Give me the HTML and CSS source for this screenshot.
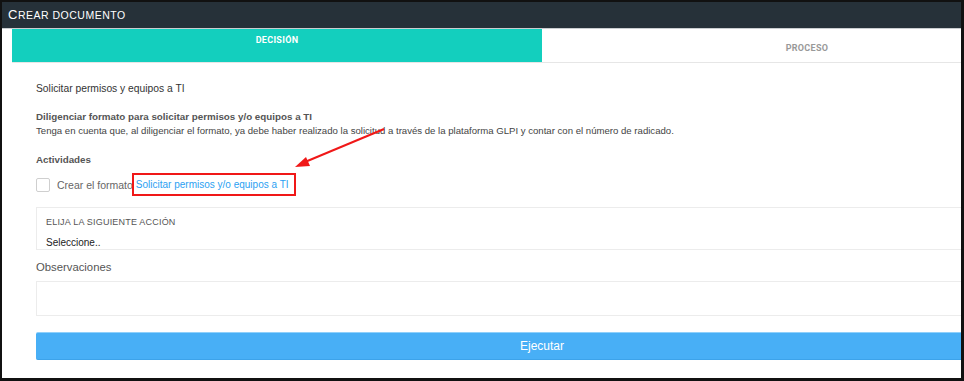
FILE: index.html
```html
<!DOCTYPE html>
<html lang="es">
<head>
    <meta charset="UTF-8">
    <meta name="viewport" content="width=device-width, initial-scale=1.0">
    <title>Crear documento</title>
    <link rel="stylesheet" href="styles.css">
</head>
<body>
    <div class="frame">
        <div class="modal-header">C<span class="sc">REAR DOCUMENTO</span></div>
        <div class="tabs">
            <div class="tab active">DECISIÓN</div>
            <div class="tab">PROCESO</div>
        </div>
        <div class="content">
            <p class="title">Solicitar permisos y equipos a TI</p>
            <p class="subtitle">Diligenciar formato para solicitar permisos y/o equipos a TI</p>
            <p class="note">Tenga en cuenta que, al diligenciar el formato, ya debe haber realizado la solicitud a través de la plataforma GLPI y contar con el número de radicado.</p>
            <p class="section">Actividades</p>
            <div class="check-row">
                <span class="checkbox"></span>
                <span class="check-label">Crear el formato</span>
                <a class="link highlight" href="#">Solicitar permisos y/o equipos a TI</a>
            </div>
            <div class="select-box">
                <div class="select-label">ELIJA LA SIGUIENTE ACCIÓN</div>
                <div class="select-value">Seleccione..</div>
            </div>
            <div class="obs-label">Observaciones</div>
            <div class="textarea"></div>
            <button class="btn-run" type="button">Ejecutar</button>
        </div>
        <svg class="arrow" width="964" height="381" viewBox="0 0 964 381">
            <line x1="384" y1="129" x2="305" y2="162" stroke="#f01818" stroke-width="2"/>
            <polygon points="295,167 306,157 310,166" fill="#f01818"/>
        </svg>
    </div>
</body>
</html>
```

FILE: styles.css
```css
body {
    margin: 0;
    padding: 0;
    font-family: 'Liberation Sans', Arial, sans-serif;
    background: #fff;
}
.frame {
    position: relative;
    width: 964px;
    height: 381px;
    box-sizing: border-box;
    border: 2px solid #111;
    border-right-width: 3px;
    border-bottom-width: 3px;
    overflow: hidden;
    background: #fff;
}
.modal-header {
    height: 26px;
    line-height: 26px;
    padding-left: 6px;
    background: #263139;
    color: #fff;
    font-size: 13px;
    letter-spacing: 0.5px;
    border-bottom: 1px solid #c9cdd0;
}
.modal-header .sc {
    font-size: 10.5px;
}
.tabs {
    display: flex;
    width: 1060px;
    margin-left: 10px;
    border-bottom: 1px solid #e6e6e6;
}
.tab {
    flex: 1;
    height: 33px;
    box-sizing: border-box;
    text-align: center;
    font-family: Roboto, 'Liberation Sans', sans-serif;
    font-size: 9px;
    font-weight: 700;
    letter-spacing: 0.3px;
    color: #999;
    padding-top: 14px;
}
.tab.active {
    background: #13cfbe;
    color: #fff;
    padding-top: 6px;
}
.content {
    width: 1010px;
    padding: 18px 0 0 34px;
}
.content p {
    margin: 0;
}
.title {
    font-size: 10.3px;
    line-height: 15px;
    color: #333;
}
.subtitle {
    margin-top: 14px !important;
    font-size: 9.8px;
    line-height: 14px;
    font-weight: 700;
    color: #555;
}
.note {
    font-size: 9.6px;
    line-height: 14px;
    color: #444;
}
.section {
    margin-top: 15px !important;
    font-size: 9.8px;
    line-height: 14px;
    font-weight: 700;
    color: #555;
}
.check-row {
    display: flex;
    align-items: center;
    height: 23px;
    margin-top: 6px;
}
.checkbox {
    width: 12px;
    height: 12px;
    border: 1px solid #cfcfcf;
    border-radius: 2px;
    margin-right: 7px;
}
.check-label {
    font-size: 10.5px;
    color: #666;
}
.link {
    font-size: 10px;
    color: #2c9ff2;
    text-decoration: none;
}
.highlight {
    display: inline-block;
    height: 23px;
    line-height: 19px;
    box-sizing: border-box;
    border: 2px solid #f01818;
    padding: 0 5px 0 2px;
    margin-left: -1px;
}
.select-box {
    margin-top: 11px;
    height: 43px;
    box-sizing: border-box;
    border: 1px solid #ececec;
    padding: 8px 0 0 9px;
}
.select-label {
    font-size: 9px;
    letter-spacing: 0.2px;
    color: #555;
    line-height: 12px;
}
.select-value {
    margin-top: 8px;
    font-size: 10px;
    color: #222;
    line-height: 13px;
}
.obs-label {
    margin-top: 9px;
    font-size: 11.3px;
    line-height: 16px;
    color: #555;
}
.textarea {
    margin-top: 6px;
    height: 35px;
    box-sizing: border-box;
    border: 1px solid #ececec;
}
.btn-run {
    display: block;
    width: 100%;
    margin-top: 16px;
    height: 28px;
    border: none;
    border-top: 1px solid #8fd0fb;
    border-bottom: 1px solid #3da3ea;
    border-radius: 2px;
    background: #48aff6;
    color: #fff;
    font-family: 'Liberation Sans', Arial, sans-serif;
    font-size: 12px;
    padding: 0;
    text-align: left;
    text-indent: 484px;
}
.arrow {
    position: absolute;
    left: -2px;
    top: -2px;
}
```
